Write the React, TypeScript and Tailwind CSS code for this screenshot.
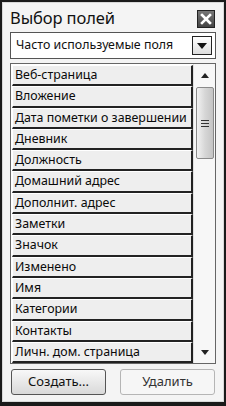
import React from 'react';

const fields = [
  'Веб-страница',
  'Вложение',
  'Дата пометки о завершении',
  'Дневник',
  'Должность',
  'Домашний адрес',
  'Дополнит. адрес',
  'Заметки',
  'Значок',
  'Изменено',
  'Имя',
  'Категории',
  'Контакты',
  'Личн. дом. страница',
];

const App: React.FC = () => {
  return (
    <div
      className="w-[226px] h-[406px] bg-[#1a1a1a] pt-[2px] px-[2px] pb-[4px]"
      style={{ fontFamily: '"Noto Sans", "Open Sans", sans-serif' }}
    >
      <div className="w-full h-full bg-[#f4f4f4] border border-[#d8d8d8] flex flex-col px-[7px] pt-[5px] pb-[6px]">
        {/* title */}
        <div className="flex items-center justify-between h-[21px]">
          <span className="text-[16.5px] leading-none text-[#111] tracking-[-0.1px]">Выбор полей</span>
          <button className="w-[18px] h-[18px] bg-gradient-to-b from-[#777] to-[#444] border border-[#222] flex items-center justify-center mr-[1px]">
            <svg width="12" height="12" viewBox="0 0 12 12">
              <path d="M2 2 L10 10 M10 2 L2 10" stroke="#fff" strokeWidth="2.6" strokeLinecap="square" />
            </svg>
          </button>
        </div>

        {/* dropdown */}
        <div className="mt-[3px] h-[27px] bg-white border border-[#555] flex items-center pl-[5px] pr-[3px]">
          <span className="flex-1 text-[12.4px] text-[#111] leading-none">Часто используемые поля</span>
          <div className="w-[20px] h-[19px] border border-[#222] bg-gradient-to-b from-white to-[#ddd] flex items-center justify-center">
            <svg width="10" height="6" viewBox="0 0 10 6">
              <path d="M0 0 H10 L5 6 Z" fill="#111" />
            </svg>
          </div>
        </div>

        {/* list */}
        <div className="mt-[4px] h-[301px] bg-white border border-[#666] flex">
          <div className="flex-1 flex flex-col pl-[1px] pt-[1px]">
            {fields.map((f) => (
              <div
                key={f}
                className="h-[21.3px] shrink-0 bg-[#eeeeee] border-l border-l-white border-t border-t-white border-b-[2px] border-b-[#222] border-r-[2px] border-r-[#222] flex items-center pl-[2px] text-[12.4px] text-[#0a0a0a] leading-none whitespace-nowrap overflow-hidden"
              >
                {f}
              </div>
            ))}
          </div>
          <div className="w-[22px] flex flex-col items-center bg-[#f7f7f7] border-l border-[#e0e0e0]">
            <div className="h-[22px] flex items-center justify-center">
              <svg width="8" height="5" viewBox="0 0 8 5">
                <path d="M0 5 H8 L4 0 Z" fill="#222" />
              </svg>
            </div>
            <div className="w-[18px] h-[72px] mt-[1px] rounded-[2px] border border-[#8a8a8a] bg-gradient-to-r from-[#f2f2f2] via-[#d6d6d6] to-[#c4c4c4] flex flex-col items-center justify-center gap-[2px]">
              <div className="w-[8px] h-[1px] bg-[#333]" />
              <div className="w-[8px] h-[1px] bg-[#333]" />
              <div className="w-[8px] h-[1px] bg-[#333]" />
            </div>
            <div className="flex-1" />
            <div className="h-[22px] flex items-center justify-center">
              <svg width="8" height="5" viewBox="0 0 8 5">
                <path d="M0 0 H8 L4 5 Z" fill="#222" />
              </svg>
            </div>
          </div>
        </div>

        {/* buttons */}
        <div className="mt-auto flex justify-between pl-[1px] pr-[1px]">
          <button className="w-[95px] h-[26px] rounded-[3px] border border-[#555] bg-gradient-to-b from-[#f8f8f8] to-[#d9d9d9] text-[13px] text-[#111]">
            Создать...
          </button>
          <button className="w-[95px] h-[26px] rounded-[3px] border border-[#b5b5b5] bg-[#f6f6f6] text-[13px] text-[#333]">
            Удалить
          </button>
        </div>
      </div>
    </div>
  );
};

export default App;
